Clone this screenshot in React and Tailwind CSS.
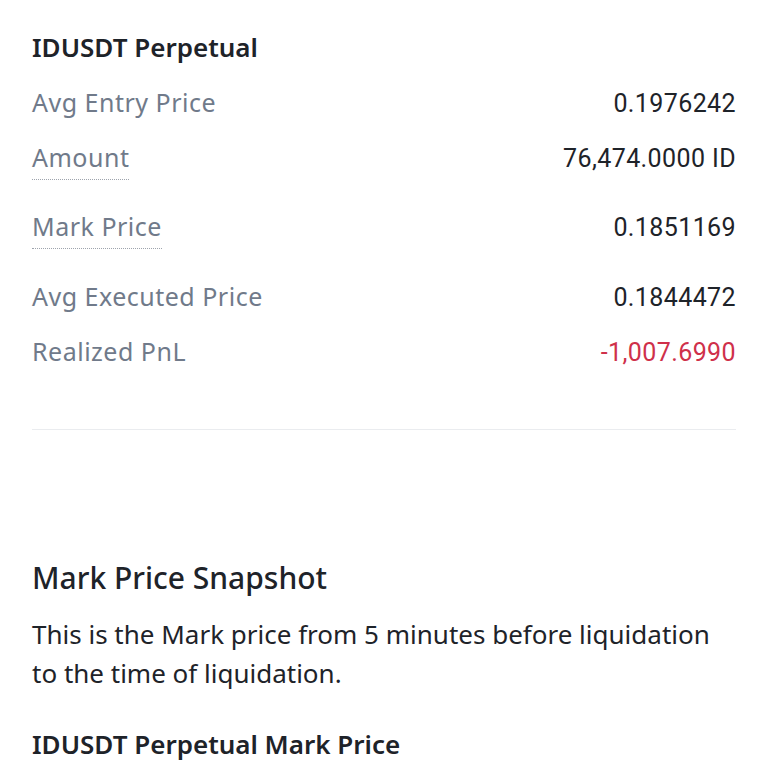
export default function App() {
  const rows = [
    { label: 'Avg Entry Price', value: '0.1976242', mt: 'mt-[23px]' },
    { label: 'Amount', value: '76,474.0000 ID', mt: 'mt-[23px]', dotted: true },
    { label: 'Mark Price', value: '0.1851169', mt: 'mt-[30px]', dotted: true },
    { label: 'Avg Executed Price', value: '0.1844472', mt: 'mt-[31px]' },
    { label: 'Realized PnL', value: '-1,007.6990', mt: 'mt-[23px]', red: true },
  ];

  return (
    <div className="min-h-[768px] bg-white px-8 pt-[31px] font-['Noto_Sans',sans-serif]">
      {/* position summary */}
      <div className="h-8 text-[26px] font-semibold leading-8 text-[#1e2329]">IDUSDT Perpetual</div>

      {rows.map((r) => (
        <div key={r.label} className={`${r.mt} flex items-start justify-between`}>
          <span
            className={
              r.dotted
                ? 'border-b border-dotted border-[#9ea4ad] pb-[6px] text-[25px] leading-8 tracking-[0.5px] text-[#707a8a]'
                : 'text-[25px] leading-8 tracking-[0.5px] text-[#707a8a]'
            }
          >
            {r.label}
          </span>
          <span
            className={`translate-y-[2px] font-['Roboto',sans-serif] text-[25px] leading-8 tracking-[0.4px] ${r.red ? 'text-[#cf304a]' : 'text-[#1e2329]'}`}
          >
            {r.value}
          </span>
        </div>
      ))}

      <div className="mt-[62px] h-px bg-[#eaecef]" />

      {/* snapshot */}
      <div className="mt-[130px] text-[30px] font-medium leading-9 text-[#1e2329]">Mark Price Snapshot</div>
      <p className="mt-[19px] text-[26px] leading-[39px] text-[#1e2329]">
        This is the Mark price from 5 minutes before liquidation to the time of liquidation.
      </p>
      <div className="mt-[33px] text-[26px] font-semibold leading-9 text-[#1e2329]">IDUSDT Perpetual Mark Price</div>
    </div>
  );
}
